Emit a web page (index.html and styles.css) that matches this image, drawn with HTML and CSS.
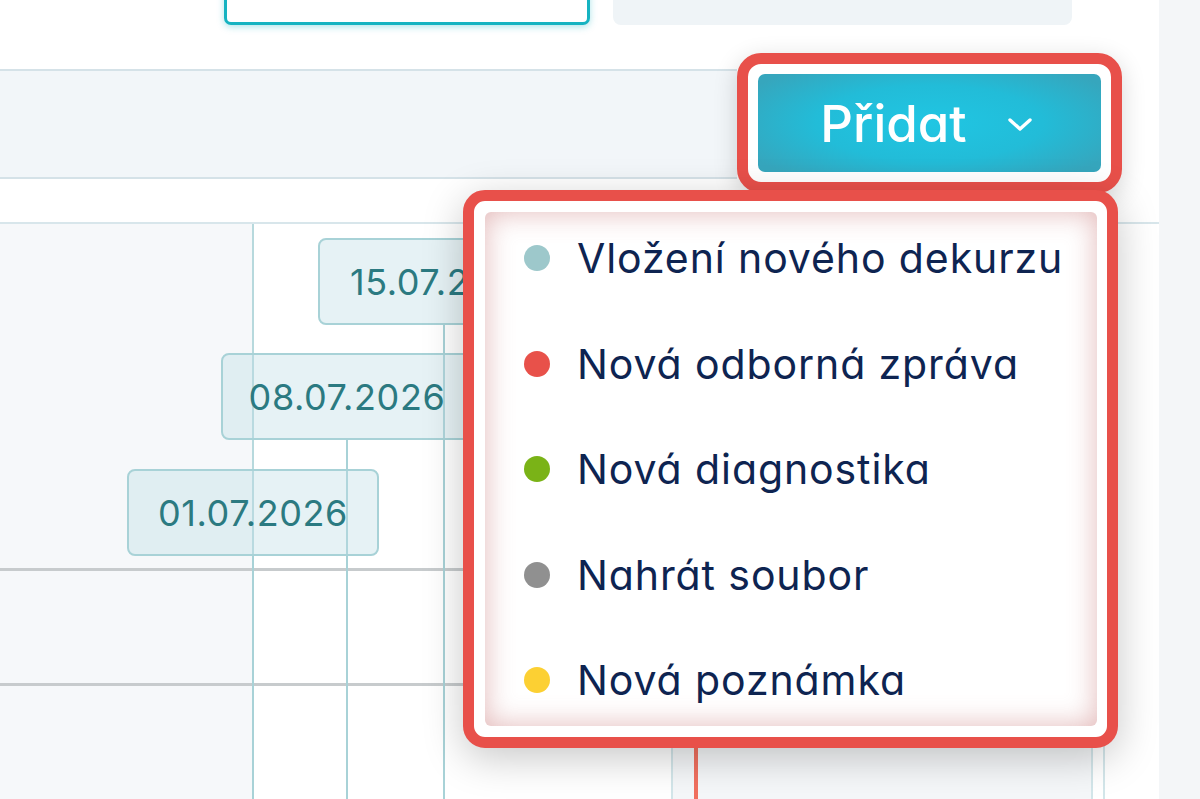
FILE: index.html
```html
<!DOCTYPE html>
<html lang="cs">
<head>
<meta charset="utf-8">
<title>Přidat</title>
<link rel="stylesheet" href="styles.css">
</head>
<body>
<div class="page">
  <div class="main">
    <header class="topbar">
      <div class="search"></div>
      <div class="pill"></div>
    </header>
    <div class="toolbar">
      <div class="band"></div>
      <div class="add-ring">
        <button class="add-btn" type="button">
          <span class="add-label">Přidat</span>
          <svg class="chev" width="26" height="15" viewBox="0 0 26 15"><polyline points="3,3 13,12 23,3" fill="none" stroke="#fff" stroke-width="3.4" stroke-linecap="round" stroke-linejoin="round"/></svg>
        </button>
      </div>
      <div class="spacer"></div>
    </div>
    <section class="timeline">
      <div class="grid">
        <div class="cell c1"></div><div class="cell c2"></div><div class="cell c3"></div><div class="cell c4"></div><div class="cell c5"></div>
        <div class="cell c1"></div><div class="cell c2"></div><div class="cell c3"></div><div class="cell c4"></div><div class="cell c5"></div>
        <div class="cell c1 last"></div><div class="cell c2 last"></div><div class="cell c3 last"></div><div class="cell c4 last"></div><div class="cell c5 last"></div>
      </div>
      <div class="today"></div>
      <div class="event" style="--x:444px; --y:14px"><div class="event-box">15.07.2026</div><div class="stem"></div></div>
      <div class="event" style="--x:347px; --y:129px"><div class="event-box">08.07.2026</div><div class="stem"></div></div>
      <div class="event" style="--x:253px; --y:245px"><div class="event-box">01.07.2026</div><div class="stem"></div></div>
    </section>
    <div class="menu">
      <div class="menu-panel">
        <div class="item"><span class="dot dot-dekurz"></span><span>Vložení nového dekurzu</span></div>
        <div class="item"><span class="dot dot-zprava"></span><span>Nová odborná zpráva</span></div>
        <div class="item"><span class="dot dot-diag"></span><span>Nová diagnostika</span></div>
        <div class="item"><span class="dot dot-soubor"></span><span>Nahrát soubor</span></div>
        <div class="item"><span class="dot dot-pozn"></span><span>Nová poznámka</span></div>
      </div>
    </div>
  </div>
  <aside class="rail"></aside>
</div>
</body>
</html>
```
FILE: styles.css
```css
html, body {
  margin: 0;
  padding: 0;
}
body {
  width: 1200px;
  height: 799px;
  overflow: hidden;
  background: #ffffff;
  font-family: Inter, "Noto Sans", "Liberation Sans", sans-serif;
  font-feature-settings: "cv11";
}
.page {
  display: flex;
  height: 799px;
}
.main {
  position: relative;
  width: 1159px;
  flex: none;
  display: flex;
  flex-direction: column;
  overflow: hidden;
}
.rail {
  flex: 1;
  background: #f4f6f8;
}

/* top bar */
.topbar {
  height: 53px;
  flex: none;
  display: flex;
  align-items: flex-start;
}
.search {
  margin-left: 224px;
  margin-top: -15px;
  width: 366px;
  height: 40px;
  box-sizing: border-box;
  border: 3px solid #16b3c1;
  border-radius: 7px;
  background: #fff;
  box-shadow: 0 2px 7px rgba(22, 179, 193, 0.35);
}
.pill {
  margin-left: 23px;
  margin-top: -10px;
  width: 459px;
  height: 35px;
  border-radius: 8px;
  background: #eff4f7;
}

/* toolbar */
.toolbar {
  height: 141px;
  flex: none;
  display: flex;
  align-items: flex-start;
}
.band {
  flex: 1;
  margin-top: 16px;
  height: 110px;
  box-sizing: border-box;
  background: #f2f6f9;
  border-top: 2px solid #d5e2e8;
  border-bottom: 2px solid #d5e2e8;
}
.add-ring {
  width: 385px;
  flex: none;
  box-sizing: border-box;
  border: 11px solid #e8504a;
  border-radius: 24px;
  padding: 10px;
  background: #fff;
  box-shadow: 0 6px 24px rgba(0, 0, 0, 0.16);
  position: relative;
  z-index: 2;
}
.add-btn {
  width: 100%;
  height: 98px;
  border: 0;
  padding: 0;
  border-radius: 7px;
  background: radial-gradient(ellipse 60% 70% at 50% 50%, #20c6e3 0%, #22bcd8 55%, #36a6bd 100%);
  display: flex;
  align-items: center;
  justify-content: center;
  gap: 40px;
  color: #fff;
  font-family: Inter, "Noto Sans", sans-serif;
  font-feature-settings: "cv11";
  font-size: 51px;
  font-weight: 500;
  cursor: pointer;
}
.add-label {
  line-height: 1;
  margin-left: -6px;
}
.chev {
  display: block;
  margin-top: 2px;
}
.spacer {
  width: 37px;
  flex: none;
}

/* timeline */
.timeline {
  position: relative;
  margin-top: 28px;
  flex: 1;
  border-top: 2px solid #d8e6eb;
}
.grid {
  display: grid;
  grid-template-columns: 254px 419px 420px 12px 1fr;
  grid-template-rows: 347px 115px 1fr;
  height: 100%;
}
.cell {
  box-sizing: border-box;
  border-bottom: 3px solid #c7cbcd;
  border-right: 2px solid #d3e6ea;
  background: #fff;
}
.cell.last {
  border-bottom: 0;
}
.c1 {
  background: #f6f8fa;
  border-right-color: #b7d9dd;
}
.c3 {
  background: #f5f7f9;
}
.c4 {
  border-bottom: 0;
}
.c5 {
  border-right: 0;
  border-bottom: 0;
}
.today {
  position: absolute;
  left: 694px;
  top: 0;
  bottom: 0;
  width: 4px;
  background: #f1705f;
}
.event {
  position: absolute;
  left: calc(var(--x) - 126px);
  top: var(--y);
  bottom: 0;
  width: 252px;
  display: flex;
  flex-direction: column;
  align-items: center;
}
.event-box {
  width: 100%;
  height: 87px;
  flex: none;
  box-sizing: border-box;
  border: 2px solid #a8d2d7;
  border-radius: 8px;
  background: rgba(190, 222, 228, 0.38);
  display: flex;
  align-items: center;
  justify-content: center;
  color: #2b7a81;
  font-size: 36px;
  letter-spacing: 0.6px;
  font-weight: 400;
}
.stem {
  flex: 1;
  width: 2px;
  background: #a8d2d7;
}

/* dropdown menu */
.menu {
  position: absolute;
  left: 463px;
  top: 190px;
  width: 655px;
  height: 558px;
  box-sizing: border-box;
  border: 11px solid #e8504a;
  border-radius: 22px;
  padding: 11px 10px 11px 11px;
  background: #fff;
  box-shadow: 0 10px 40px rgba(0, 0, 0, 0.22);
  z-index: 3;
}
.menu-panel {
  height: 100%;
  box-sizing: border-box;
  border-radius: 6px;
  background: #fff;
  box-shadow: inset 0 0 28px rgba(190, 95, 95, 0.45);
  padding: 26px 0 0 39px;
  display: flex;
  flex-direction: column;
  gap: 65.6px;
}
.item {
  display: flex;
  align-items: center;
  height: 40px;
  gap: 27px;
  font-size: 41px;
  letter-spacing: 0.9px;
  font-weight: 400;
  color: #0e2451;
  white-space: nowrap;
}
.dot {
  width: 26px;
  height: 26px;
  flex: none;
  border-radius: 50%;
}
.dot-dekurz { background: #9dc8cb; }
.dot-zprava { background: #e8514a; }
.dot-diag { background: #7ab317; }
.dot-soubor { background: #909090; }
.dot-pozn { background: #fcd033; }
```
